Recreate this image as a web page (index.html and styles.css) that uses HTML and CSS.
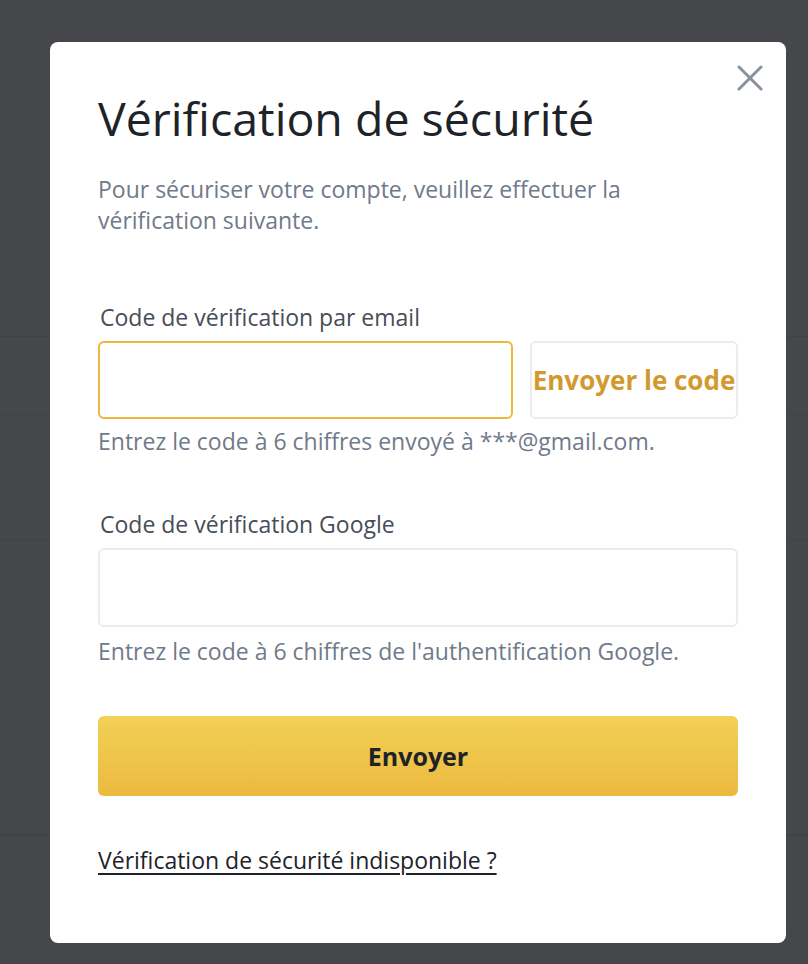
FILE: index.html
```html
<!DOCTYPE html>
<html>
	<head>
		<meta charset="UTF-8">
		<meta name="viewport" content="width=device-width, initial-scale=1.0" />
		<title>Vérification de sécurité</title>
		<link rel="stylesheet" href="styles.css">
	</head>
	<body>
		<div class="page">
			<div class="row r1"></div>
			<div class="row r2"></div>
			<div class="row r3"></div>
			<div class="row r4"></div>
			<div class="row r5"></div>
		</div>

		<div class="modal">
			<span class="close">
				<svg width="26" height="26" viewBox="0 0 26 26"><path d="M2 2L24 24M24 2L2 24" stroke="#8a919e" stroke-width="3" stroke-linecap="round"/></svg>
			</span>
			<h1 class="title">Vérification de sécurité</h1>
			<p class="desc">Pour sécuriser votre compte, veuillez effectuer la vérification suivante.</p>

			<div class="label l1">Code de vérification par email</div>
			<div class="field">
				<input class="input focus" type="text">
				<div class="send">Envoyer le code</div>
			</div>
			<div class="hint">Entrez le code à 6 chiffres envoyé à ***@gmail.com.</div>

			<div class="label l2">Code de vérification Google</div>
			<input class="input full" type="text">
			<div class="hint h2">Entrez le code à 6 chiffres de l'authentification Google.</div>

			<div class="submit">Envoyer</div>
			<a class="help" href="#">Vérification de sécurité indisponible ?</a>
		</div>
	</body>
</html>
```

FILE: styles.css
```css
body{padding:0;margin:0;background:#46474b;font-family:"Open Sans","Noto Sans",sans-serif;}
.page{height:964px;overflow:hidden;}
.row{border-bottom:1px solid #414246;}
.r1{height:336px;}
.r2{height:77px;}
.r3{height:124px;}
.r4{height:294px;}

.modal{position:absolute;left:50px;top:42px;width:736px;height:901px;box-sizing:border-box;background:#fff;border-radius:8px;padding:48px 48px 0 48px;}
.close{position:absolute;top:23px;right:23px;width:26px;height:26px;display:block;}
.close svg{display:block;}

.title{margin:0;font-size:46.5px;line-height:56px;font-weight:400;color:#1e2329;}
.desc{margin:28px 0 0 0;font-size:23px;line-height:31px;color:#707a8a;width:560px;}

.label{font-size:23px;line-height:28px;color:#474d57;padding-left:2px;}
.l1{margin-top:67px;}
.l2{margin-top:55px;}

.field{display:flex;gap:17px;margin-top:10px;}
.input{display:block;box-sizing:border-box;height:78px;border:2px solid #eaecef;border-radius:6px;outline:none;padding:0 16px;font-size:23px;background:#fff;}
.input.focus{width:415px;border-color:#ebb83c;}
.input.full{width:640px;margin-top:10px;height:79px;}
.send{width:208px;height:78px;box-sizing:border-box;border:2px solid #eaecef;border-radius:6px;display:flex;align-items:center;justify-content:center;font-size:26px;font-weight:700;color:#d19a2e;white-space:nowrap;}

.hint{margin-top:8px;font-size:23px;line-height:28px;color:#707a8a;}
.h2{margin-top:10px;}

.submit{margin-top:51px;height:80px;border-radius:6px;background:linear-gradient(180deg,#f3d056 0%,#ebba3f 100%);display:flex;align-items:center;justify-content:center;font-size:25px;font-weight:700;color:#1e2329;}
.help{display:inline-block;margin-top:50px;font-size:23px;line-height:28px;color:#1e2329;text-decoration:underline;text-underline-offset:4px;}
```
